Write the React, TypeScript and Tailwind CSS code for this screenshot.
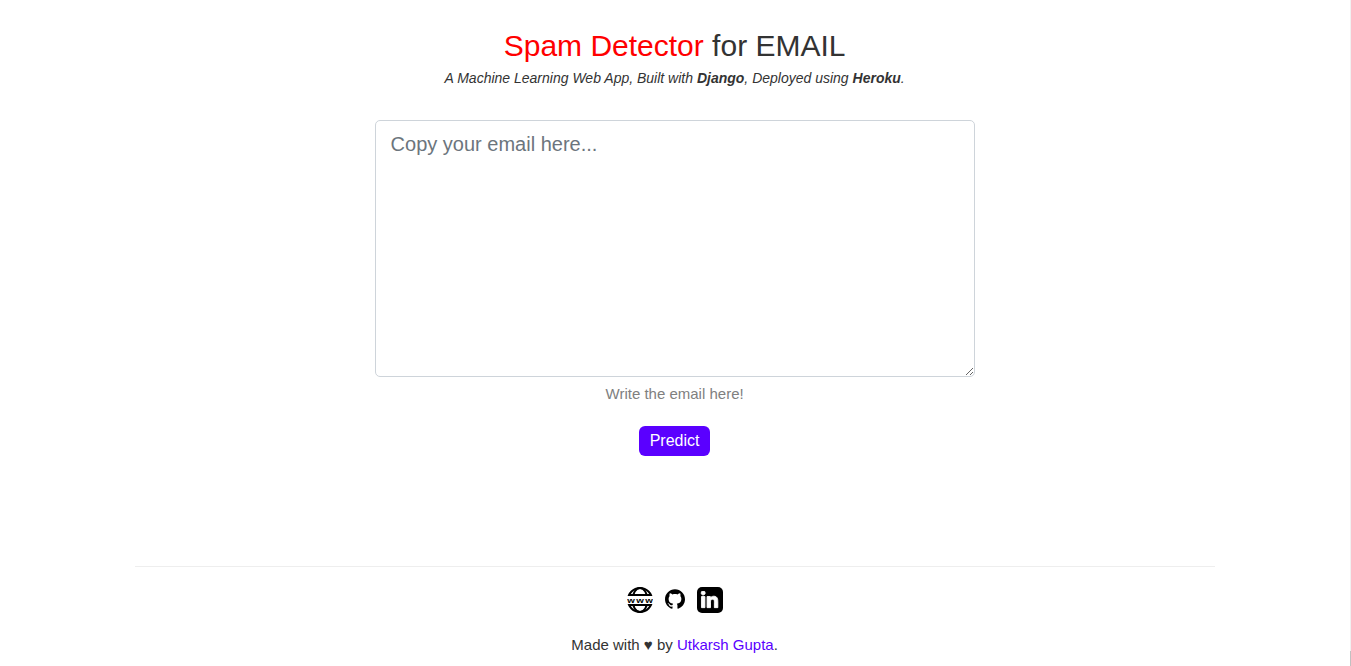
import { FaLinkedinIn } from "react-icons/fa";
import { SiGithub } from "react-icons/si";

function GlobeIcon() {
  return (
    <svg viewBox="0 0 26 26" className="size-[26px]" fill="none" stroke="#000" strokeWidth="2">
      <defs>
        <clipPath id="caps">
          <path d="M0 0H26V9H0ZM0 17H26V26H0Z" />
        </clipPath>
      </defs>
      <g clipPath="url(#caps)">
        <circle cx="13" cy="13" r="12" />
        <ellipse cx="13" cy="13" rx="7.5" ry="12" />
        <path d="M2 8H24M2 18H24" />
      </g>
      <g
        textAnchor="middle"
        className="fill-black stroke-none font-['Liberation_Sans',Arial,sans-serif] text-[8px] font-bold"
      >
        <text x="4" y="15.6" textLength="7.6" lengthAdjust="spacingAndGlyphs">w</text>
        <text x="13" y="15.6" textLength="7.6" lengthAdjust="spacingAndGlyphs">w</text>
        <text x="22" y="15.6" textLength="7.6" lengthAdjust="spacingAndGlyphs">w</text>
      </g>
    </svg>
  );
}

export default function App() {
  return (
    <div className="flex h-[666px] justify-between bg-white font-['Liberation_Sans',Arial,sans-serif] text-[#333]">
      <main className="flex w-[1349.2px] shrink-0 flex-col items-center">
        <h1 className="mt-7 text-[30px] leading-9">
          <span className="text-[#ff0000]">Spam Detector</span> for EMAIL
        </h1>
        <p className="mt-1 text-sm leading-[21px] italic">
          A Machine Learning Web App, Built with <b>Django</b>, Deployed using <b>Heroku</b>.
        </p>
        <textarea
          className="mt-[31px] h-[257px] w-[600px] shrink-0 resize rounded-[5px] border border-[#ced4da] px-[15px] py-2 text-xl leading-[30px] outline-none placeholder:text-[#6c757d]"
          placeholder="Copy your email here..."
        />
        <p className="mt-[5px] text-[15px] leading-6 text-[#808080]">Write the email here!</p>
        <button className="mt-5 h-[30px] w-[71px] shrink-0 rounded-[6px] bg-[#5a00ff] text-base leading-[30px] text-white">
          Predict
        </button>
        <footer className="mt-[110px] flex w-[1080px] flex-col items-center border-t border-[#eeeeee] pt-5">
          <div className="flex h-[26px] items-center">
            <a><GlobeIcon /></a>
            <a className="ml-3 -mt-0.5"><SiGithub className="size-5 text-black" /></a>
            <a className="ml-3 flex size-[26px] items-center justify-center rounded-[5px] bg-black">
              <FaLinkedinIn className="mt-px size-[19px] stroke-white stroke-[24] text-white" />
            </a>
          </div>
          <p className="mt-5 text-[15px] leading-6">
            Made with ♥ by <a className="text-[#5a00ff]">Utkarsh Gupta</a>.
          </p>
        </footer>
      </main>
      <div className="flex w-px shrink-0 flex-col justify-end bg-[#f1f1f1]">
        <div className="h-[15px] bg-[#c1c1c1]" />
      </div>
    </div>
  );
}
